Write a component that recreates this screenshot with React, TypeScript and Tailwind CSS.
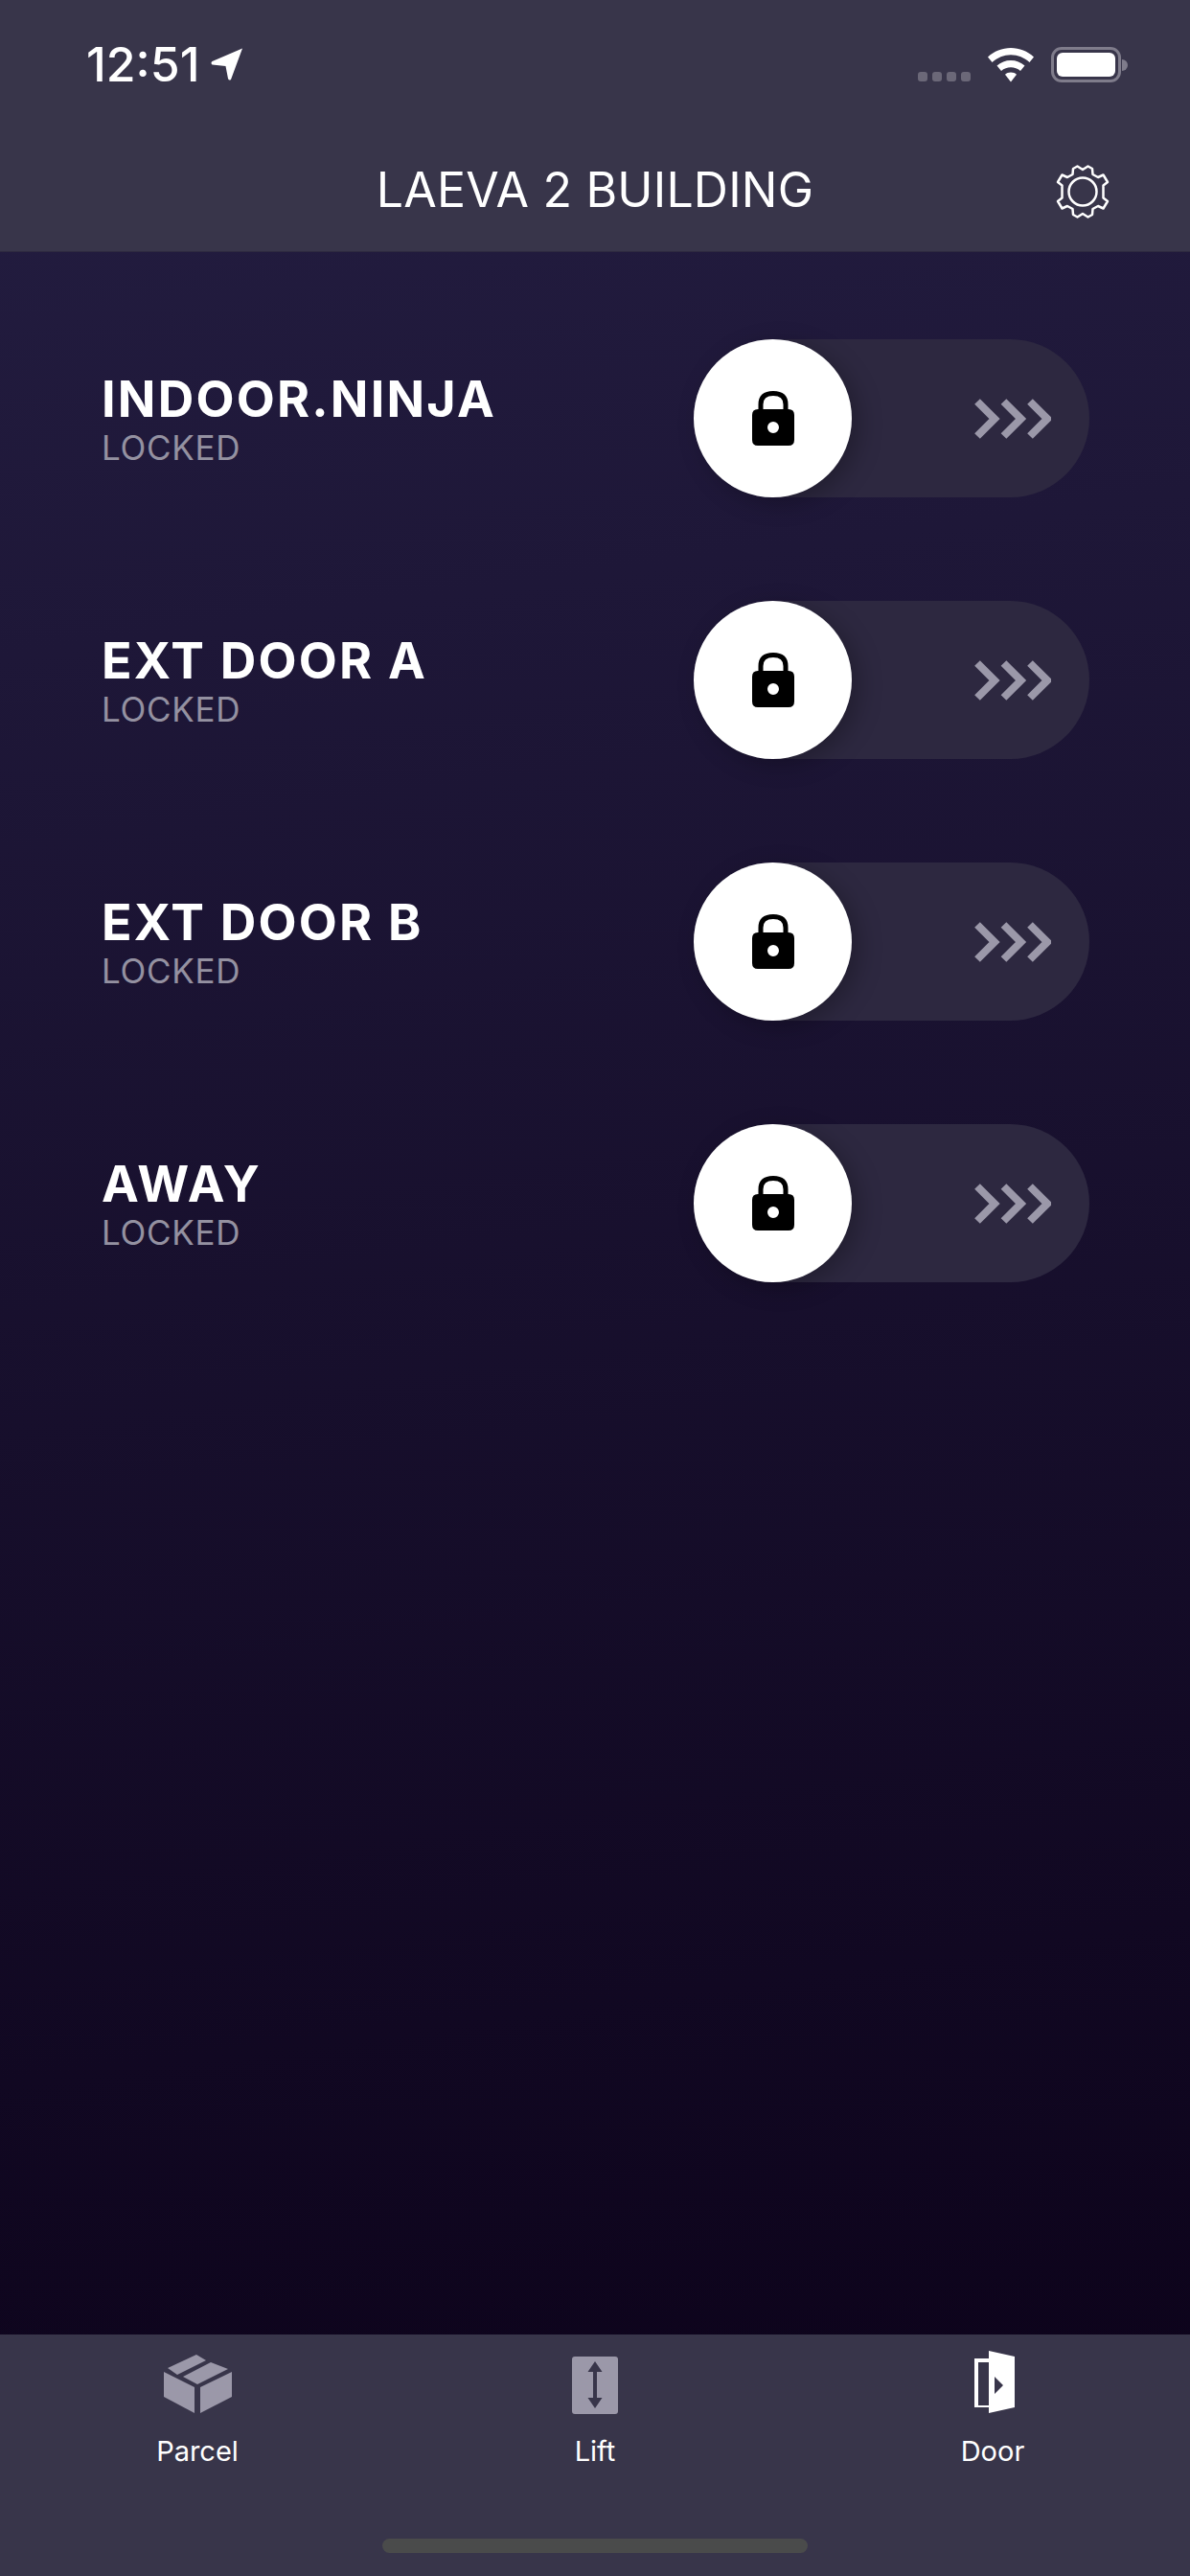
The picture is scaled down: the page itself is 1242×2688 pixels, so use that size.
const doors = ["INDOOR.NINJA", "EXT DOOR A", "EXT DOOR B", "AWAY"]

const LocationArrow = () => (
    <svg width="34" height="34" viewBox="0 0 34 34" className="ml-[12px]">
        <path d="M33 0.500 L21 33 Q19 34.500 18 32 L15.500 19 L1.500 17.500 Q-0.500 15.500 1.500 14 Z" fill="#fff" />
    </svg>
)

const StatusIcons = () => (
    <div className="flex items-end">
        <div className="flex gap-[5px] mb-[1px]">
            {[0, 1, 2, 3].map(i => <div key={i} className="w-[10px] h-[10px] rounded-[3px] bg-[#6b6878]" />)}
        </div>
        <svg width="50" height="36" viewBox="0 0 50 36" className="ml-[17px]">
            <path d="M25 0 C34 0 42.500 3.500 49 9.500 L44.500 15 C39 10 32.500 7.200 25 7.200 C17.500 7.200 11 10 5.500 15 L1 9.500 C7.500 3.500 16 0 25 0 Z" fill="#fff" />
            <path d="M25 13 C30.500 13 35.500 15 39.500 18.500 L35 24 C32 21.500 28.800 20.300 25 20.300 C21.200 20.300 18 21.500 15 24 L10.500 18.500 C14.500 15 19.500 13 25 13 Z" fill="#fff" />
            <path d="M25 25.500 C27.500 25.500 29.500 26.300 31 27.700 L25 35.500 L19 27.700 C20.500 26.300 22.500 25.500 25 25.500 Z" fill="#fff" />
        </svg>
        <div className="ml-[17px] w-[73px] h-[37px] rounded-[11px] border-[3px] border-[#7f7c8b] p-[3px]">
            <div className="w-full h-full rounded-[6px] bg-white" />
        </div>
        <div className="w-[6px] h-[12px] mb-[12px] ml-[1px] rounded-r-full bg-[#7f7c8b]" />
    </div>
)

const Gear = () => (
    <svg width="58" height="58" viewBox="0 0 58 58" fill="none" stroke="#fff" strokeWidth="2.500" strokeLinejoin="round">
        <path d="M23.500 2.500 L29 6 L34.500 2.500 L39 5 L39.500 11 L45 14 L50.500 11.500 L55 19 L50.500 22.500 L50.500 29 L50.500 35.500 L55 39 L50.500 46.500 L45 44 L39.500 47 L39 53 L34.500 55.500 L29 52 L23.500 55.500 L19 53 L18.500 47 L13 44 L7.500 46.500 L3 39 L7.500 35.500 L7.500 22.500 L3 19 L7.500 11.500 L13 14 L18.500 11 L19 5 Z" />
        <circle cx="29" cy="29" r="14.500" />
    </svg>
)

const Lock = () => (
    <svg width="44" height="58" viewBox="0 0 44 58">
        <path d="M9 21 V14 C9 6 14 2.500 22 2.500 C30 2.500 35 6 35 14 V21" fill="none" stroke="#000" strokeWidth="5" />
        <path fillRule="evenodd" d="M6 19 H38 Q44 19 44 25 V51 Q44 57 38 57 H6 Q0 57 0 51 V25 Q0 19 6 19 Z M22 32 A6 6 0 1 0 22 44 A6 6 0 1 0 22 32 Z" fill="#000" />
    </svg>
)

const Chevrons = () => (
    <svg width="80" height="42" viewBox="0 0 80 42" fill="none" stroke="#9b98a9" strokeWidth="8">
        <path d="M3 3 L21 21 L3 39" />
        <path d="M30.500 3 L48.500 21 L30.500 39" />
        <path d="M58 3 L76 21 L58 39" />
    </svg>
)

const ParcelIcon = () => (
    <svg width="72" height="62" viewBox="0 0 72 62" fill="#9b98a9" className="ml-[2px]">
        <path d="M0 18 L32 34 V61 L0 44 Z" />
        <path d="M71 18 L38 34 V61 L71 44 Z" />
        <path d="M4 14 L34 0 L44 6 L14 21 Z" />
        <path d="M20 23 L49 8 L67 15 L35 31 Z" />
    </svg>
)

const LiftIcon = () => (
    <svg width="48" height="60" viewBox="0 0 48 60">
        <rect x="0" y="0" width="48" height="60" rx="3" fill="#9b98a9" />
        <path d="M24 5 L31.500 16 H26 V43 H31.500 L24 54 L16.500 43 H22 V16 H16.500 Z" fill="#38354a" />
    </svg>
)

const DoorIcon = () => (
    <svg width="44" height="66" viewBox="0 0 44 66" className="ml-[4px]">
        <path d="M1 8 H17 V12 H5 V57 H17 V59 H1 Z" fill="#fff" />
        <path fillRule="evenodd" d="M16 0 L43 6 V59 L16 65 Z M22 27 V45 L31 36 Z" fill="#fff" />
    </svg>
)

const DoorRow = ({ name }: { name: string }) => (
    <div className="flex items-center justify-between pl-[106px] pr-[105px]">
        <div className="flex flex-col mt-[3px]">
            <h2 className="text-[52px] leading-[52px] font-bold text-white tracking-[2.2px]">{name}</h2>
            <p className="text-[35px] leading-[36px] text-[#9491a1] mt-[6px] tracking-[0.7px]">LOCKED</p>
        </div>
        <div className="w-[413px] h-[165px] rounded-full bg-[#2d2840] flex items-center justify-between pr-[40px]">
            <div className="w-[165px] h-[165px] rounded-full bg-white flex items-center justify-center shadow-[8px_6px_24px_rgba(0,0,0,0.25)]">
                <Lock />
            </div>
            <Chevrons />
        </div>
    </div>
)

const TabItem = ({ label, icon }: { label: string, icon: React.ReactNode }) => (
    <div className="flex flex-col items-center w-[240px]">
        <div className="h-[83px] flex items-end">{icon}</div>
        <span className="text-[29px] leading-[36px] text-white mt-[21px]">{label}</span>
    </div>
)

export default function App() {
    return (
        <div className="w-[1242px] h-[2688px] flex flex-col font-['Inter',sans-serif] bg-[linear-gradient(172deg,#241e42_0%,#0b0118_100%)]">
            <header className="h-[263px] bg-[#38354a] border-b border-[#2e2a40] flex flex-col px-[90px]">
                <div className="flex items-center justify-between h-[36px] mt-[49px] -mr-[25px]">
                    <div className="flex items-center">
                        <span className="text-[50px] leading-[48px] font-medium text-white">12:51</span>
                        <LocationArrow />
                    </div>
                    <StatusIcons />
                </div>
                <div className="relative flex justify-center mt-[83px]">
                    <h1 className="text-[50px] leading-[60px] text-white tracking-[0.2px]">LAEVA 2 BUILDING</h1>
                    <div className="absolute right-[-7px] top-[3px]"><Gear /></div>
                </div>
            </header>
            <main className="flex-1 flex flex-col gap-[108px] pt-[91px]">
                {doors.map(d => <DoorRow key={d} name={d} />)}
            </main>
            <footer className="h-[252px] bg-[#38354a] flex flex-col">
                <div className="flex justify-between px-[86px]">
                    <TabItem label="Parcel" icon={<ParcelIcon />} />
                    <TabItem label="Lift" icon={<LiftIcon />} />
                    <TabItem label="Door" icon={<DoorIcon />} />
                </div>
                <div className="w-[444px] h-[15px] rounded-full bg-[#4a4b4b] mx-auto mt-[73px]" />
            </footer>
        </div>
    )
}
